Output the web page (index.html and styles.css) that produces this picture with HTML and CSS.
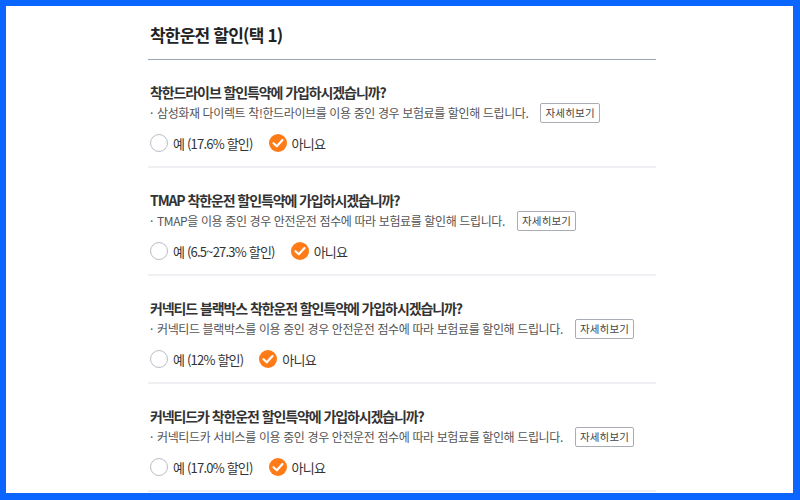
FILE: index.html
```html
<!DOCTYPE html>
<html lang="ko">
<head>
<meta charset="utf-8">
<link rel="stylesheet" href="styles.css">
</head>
<body>
<div class="frame">
  <div class="panel">
    <h2 class="title">착한운전 할인(택 1)</h2>

    <section class="item">
      <h3 class="q">착한드라이브 할인특약에 가입하시겠습니까?</h3>
      <p class="desc"><span class="dot">·</span>삼성화재 다이렉트 착!한드라이브를 이용 중인 경우 보험료를 할인해 드립니다.<span class="more">자세히보기</span></p>
      <div class="opts">
        <span class="opt"><span class="radio"></span>예 (17.6% 할인)</span>
        <span class="opt"><span class="radio on"><svg viewBox="0 0 18 18" width="18" height="18"><path d="M4.5 9.2 L7.8 12.3 L13.5 6.1" fill="none" stroke="#fff" stroke-width="2.2" stroke-linecap="round" stroke-linejoin="round"/></svg></span>아니요</span>
      </div>
    </section>

    <section class="item">
      <h3 class="q">TMAP 착한운전 할인특약에 가입하시겠습니까?</h3>
      <p class="desc"><span class="dot">·</span>TMAP을 이용 중인 경우 안전운전 점수에 따라 보험료를 할인해 드립니다.<span class="more">자세히보기</span></p>
      <div class="opts">
        <span class="opt"><span class="radio"></span>예 (6.5~27.3% 할인)</span>
        <span class="opt"><span class="radio on"><svg viewBox="0 0 18 18" width="18" height="18"><path d="M4.5 9.2 L7.8 12.3 L13.5 6.1" fill="none" stroke="#fff" stroke-width="2.2" stroke-linecap="round" stroke-linejoin="round"/></svg></span>아니요</span>
      </div>
    </section>

    <section class="item">
      <h3 class="q">커넥티드 블랙박스 착한운전 할인특약에 가입하시겠습니까?</h3>
      <p class="desc"><span class="dot">·</span>커넥티드 블랙박스를 이용 중인 경우 안전운전 점수에 따라 보험료를 할인해 드립니다.<span class="more">자세히보기</span></p>
      <div class="opts">
        <span class="opt"><span class="radio"></span>예 (12% 할인)</span>
        <span class="opt"><span class="radio on"><svg viewBox="0 0 18 18" width="18" height="18"><path d="M4.5 9.2 L7.8 12.3 L13.5 6.1" fill="none" stroke="#fff" stroke-width="2.2" stroke-linecap="round" stroke-linejoin="round"/></svg></span>아니요</span>
      </div>
    </section>

    <section class="item">
      <h3 class="q">커넥티드카 착한운전 할인특약에 가입하시겠습니까?</h3>
      <p class="desc"><span class="dot">·</span>커넥티드카 서비스를 이용 중인 경우 안전운전 점수에 따라 보험료를 할인해 드립니다.<span class="more">자세히보기</span></p>
      <div class="opts">
        <span class="opt"><span class="radio"></span>예 (17.0% 할인)</span>
        <span class="opt"><span class="radio on"><svg viewBox="0 0 18 18" width="18" height="18"><path d="M4.5 9.2 L7.8 12.3 L13.5 6.1" fill="none" stroke="#fff" stroke-width="2.2" stroke-linecap="round" stroke-linejoin="round"/></svg></span>아니요</span>
      </div>
    </section>
  </div>
</div>
</body>
</html>
```

FILE: styles.css
```css
* { box-sizing: border-box; }
html, body { margin: 0; padding: 0; }
body {
  font-family: "Noto Sans CJK KR", "Noto Sans", sans-serif;
  color: #333;
  background: #fff;
}
.frame {
  width: 800px;
  height: 500px;
  border-style: solid;
  border-color: #0a66ff;
  border-width: 6px 7px 7px 6px;
  background: #fff;
  overflow: hidden;
}
.panel {
  width: 508px;
  margin-left: 142px;
}
.title {
  margin: 17px 0 0;
  padding: 0 0 12px 2px;
  font-size: 17px;
  line-height: 24px;
  font-weight: 700;
  color: #222;
  letter-spacing: -0.8px;
  border-bottom: 1px solid #9ba6b3;
}
.item {
  padding: 22px 0 13px 2px;
  border-bottom: 2px solid #efeff4;
}
.q {
  margin: 0;
  font-size: 14px;
  line-height: 20px;
  font-weight: 700;
  color: #333;
  letter-spacing: -1.1px;
}
.desc {
  margin: 1px 0 0;
  font-size: 12px;
  line-height: 20px;
  color: #555;
  letter-spacing: -0.38px;
  display: flex;
  align-items: center;
}
.dot { width: 7px; display: inline-block; }
.more {
  margin-left: 12px;
  height: 20px;
  padding: 0 4px;
  border: 1px solid #a8adb5;
  border-radius: 2px;
  font-size: 10.5px;
  line-height: 18px;
  letter-spacing: 0.2px;
  color: #444;
}
.opts {
  margin-top: 10px;
  display: flex;
  gap: 16px;
  height: 20px;
  align-items: center;
}
.opt {
  display: flex;
  align-items: center;
  gap: 5px;
  font-size: 13px;
  color: #333;
  letter-spacing: -0.8px;
}
.radio {
  width: 18px;
  height: 18px;
  border-radius: 50%;
  border: 1px solid #b9bec6;
  background: #fff;
  display: flex;
}
.radio.on {
  border: none;
  background: #ff7b17;
}
```
